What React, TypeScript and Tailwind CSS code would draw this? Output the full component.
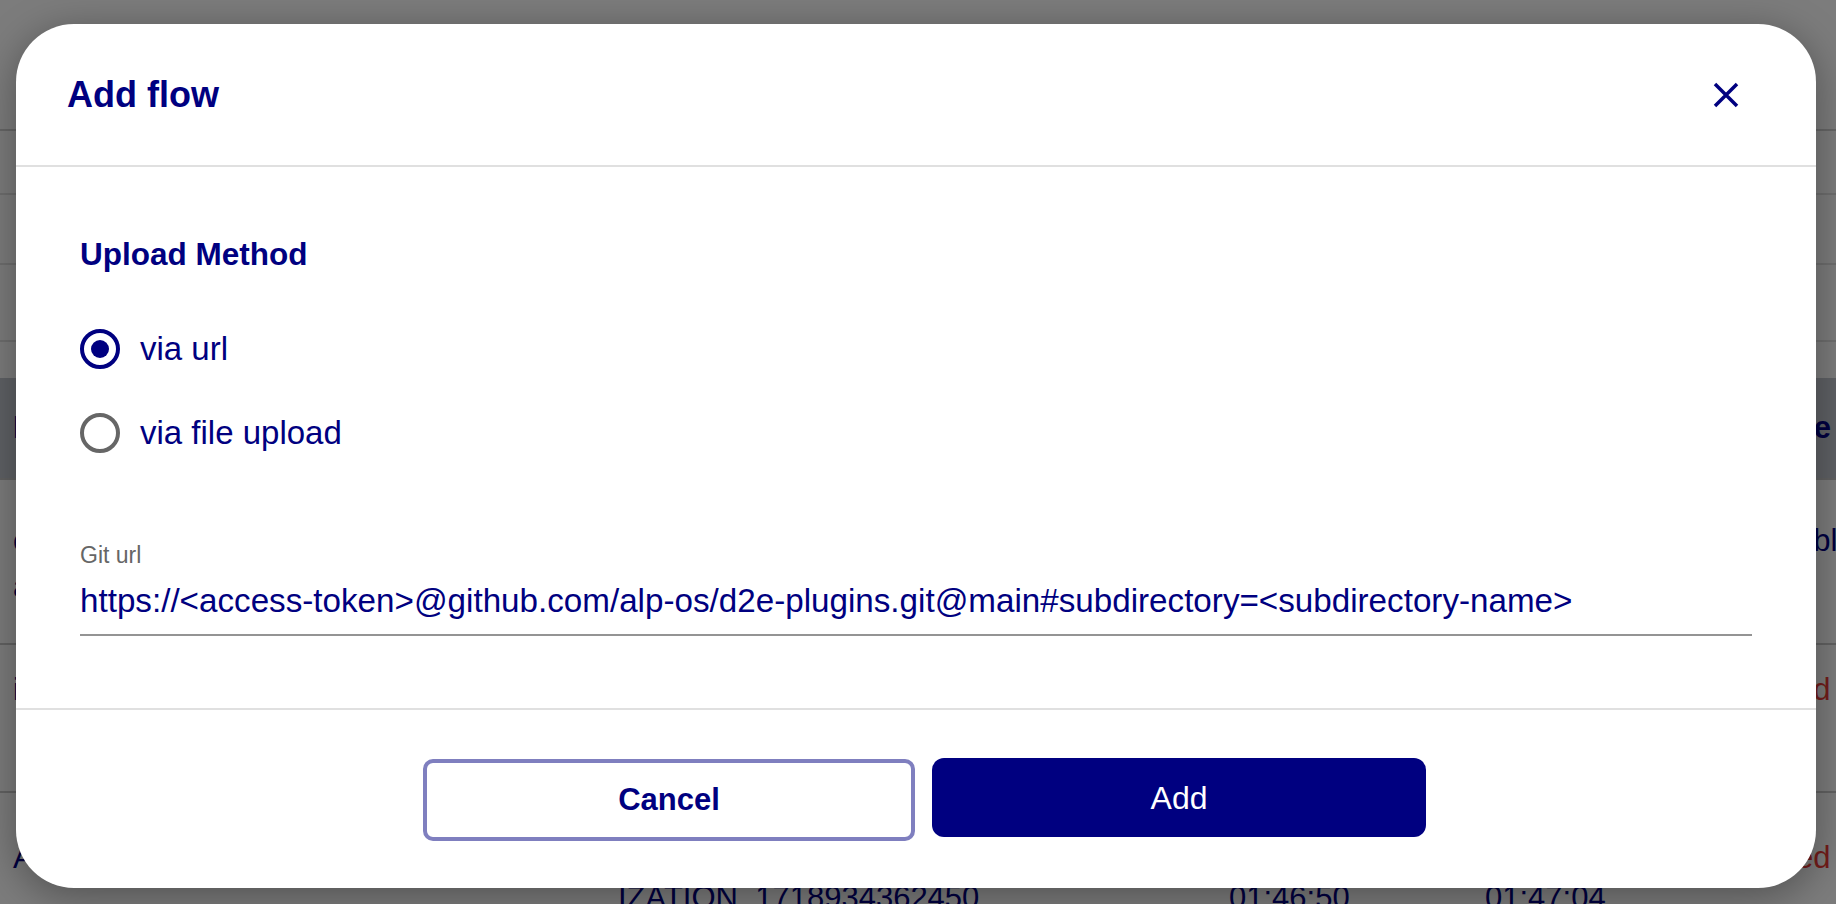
const NAVY = "#000080";

function BackgroundPage() {
  return (
    <div className="flex h-full flex-col bg-[#f8f8f8] text-[31px] leading-10 text-[#000080]">
      <div className="h-[131px] shrink-0 border-b-2 border-[#cccccc]" />
      <div className="h-[64px] shrink-0 border-b-2 border-[#dddddd]" />
      <div className="h-[70px] shrink-0 border-b-2 border-[#dddddd]" />
      <div className="h-[77px] shrink-0 border-b-2 border-[#dddddd]" />
      <div className="h-[36px] shrink-0" />
      <div className="grid h-[102px] shrink-0 grid-cols-[605px_611px_256px_273px_1fr] items-center border-b-2 border-[#c4c4c4] bg-[#bfc3ca] pl-[13px] font-bold">
        <div>Name</div>
        <div>Flow run</div>
        <div>Start</div>
        <div>End</div>
        <div className="ml-[3px]">Type</div>
      </div>
      <div className="grid h-[165px] shrink-0 grid-cols-[605px_611px_256px_273px_1fr] border-b-2 border-[#c4c4c4] pt-[38px] pl-[13px] leading-[46px]">
        <div>
          <div>cohort_generator</div>
          <div>analysis</div>
        </div>
        <div>cohort_run_1718934</div>
        <div>2024-06-21</div>
        <div>2024-06-21</div>
        <div>Enabled</div>
      </div>
      <div className="grid h-[148px] shrink-0 grid-cols-[605px_611px_256px_273px_1fr] border-b-2 border-[#c4c4c4] pt-[25px] pl-[13px]">
        <div>import_plugin</div>
        <div>import_run_1718934</div>
        <div>2024-06-21</div>
        <div>2024-06-21</div>
        <div className="-ml-3 text-[#e53935]">Failed</div>
      </div>
      <div className="grid flex-1 grid-cols-[605px_611px_256px_273px_1fr] pt-[45px] pl-[13px]">
        <div>ALP</div>
        <div>
          <div>DATA_CHARACTER</div>
          <div>IZATION_1718934362450</div>
        </div>
        <div>
          <div>2024-06-21</div>
          <div>01:46:50</div>
        </div>
        <div>
          <div>2024-06-21</div>
          <div>01:47:04</div>
        </div>
        <div className="-ml-3 text-[#e53935]">Failed</div>
      </div>
    </div>
  );
}

function Radio({ checked, label }: { checked: boolean; label: string }) {
  return (
    <div className="flex h-[84px] items-center gap-5">
      <div
        className={
          checked
            ? "flex h-10 w-10 items-center justify-center rounded-full border-4 border-[#000080]"
            : "flex h-10 w-10 items-center justify-center rounded-full border-4 border-[#666666]"
        }
      >
        {checked && <div className="h-[18px] w-[18px] rounded-full bg-[#000080]" />}
      </div>
      <span className="text-[33px] leading-10 text-[#000080]">{label}</span>
    </div>
  );
}

function Modal() {
  return (
    <div className="flex h-[864px] w-[1800px] flex-col overflow-hidden rounded-[58px] bg-white shadow-[0_8px_40px_rgba(0,0,0,0.35)]">
      <div className="flex h-[143px] shrink-0 items-center justify-between border-b-2 border-[#e0e0e0] pl-[51px] pr-[77px]">
        <h2 className="text-[36px] font-bold leading-[42px] text-[#000080]">Add flow</h2>
        <button className="flex h-[26px] w-[26px] items-center justify-center">
          <svg width="26" height="26" viewBox="0 0 26 26" fill="none">
            <path d="M2 2L24 24M24 2L2 24" stroke={NAVY} strokeWidth="3.5" />
          </svg>
        </button>
      </div>

      <div className="flex h-[543px] shrink-0 flex-col border-b-2 border-[#e0e0e0] px-16 pt-[69px]">
        <div className="text-[31.5px] font-bold leading-9 text-[#000080]">Upload Method</div>
        <div className="mt-[35px] flex flex-col">
          <Radio checked label="via url" />
          <Radio checked={false} label="via file upload" />
        </div>
        <div className="mt-[67px] text-[23px] leading-[26px] text-[#666666]">Git url</div>
        <div className="mt-[13px] border-b-2 border-[#949494] pb-[13px] text-[33.2px] leading-10 text-[#000080]">
          https://&lt;access-token&gt;@github.com/alp-os/d2e-plugins.git@main#subdirectory=&lt;subdirectory-name&gt;
        </div>
      </div>

      <div className="flex flex-1 items-start justify-center gap-[17px] pl-[17px] pt-12">
        <button className="mt-px h-[82px] w-[492px] rounded-[10px] border-4 border-[#7f7fbf] bg-white text-[31px] font-bold text-[#000080]">
          Cancel
        </button>
        <button className="h-[79px] w-[494px] rounded-[12px] bg-[#000080] text-[32px] text-white">Add</button>
      </div>
    </div>
  );
}

export default function App() {
  return (
    <div className="relative h-[904px] w-[1836px] overflow-hidden font-['Liberation_Sans',Arial,sans-serif]">
      <BackgroundPage />
      <div className="absolute inset-0 bg-black/50 pl-4 pt-6">
        <Modal />
      </div>
    </div>
  );
}
